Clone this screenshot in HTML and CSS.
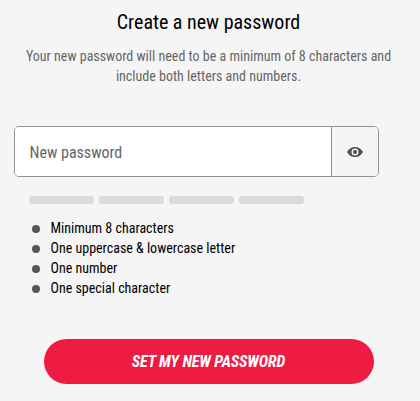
FILE: index.html
```html
<!DOCTYPE html>
<html lang="en">
<head>
<meta charset="utf-8">
<title>Create a new password</title>
<link rel="stylesheet" href="styles.css">
</head>
<body>
<main class="page">
  <h1 class="title">Create a new password</h1>
  <p class="intro"><span>Your new password will need to be a minimum of 8 characters and</span><span>include both letters and numbers.</span></p>
  <form class="form">
    <div class="field">
      <input class="input" type="password" placeholder="New password" aria-label="New password">
      <button class="toggle" type="button" aria-label="Show password">
        <svg width="16" height="10" viewBox="0 0 16 10"><path fill="#505050" fill-rule="evenodd" d="M8 0C4.400 0 1.600 2 0 5c1.600 3 4.400 5 8 5s6.400-2 8-5C14.400 2 11.600 0 8 0Zm0 8.500a3.500 3.500 0 1 1 0-7 3.500 3.500 0 0 1 0 7ZM8 3a2 2 0 1 0 0 4 2 2 0 0 0 0-4Z"/></svg>
      </button>
    </div>
    <div class="strength"><i></i><i></i><i></i><i></i></div>
    <ul class="rules">
      <li><span>Minimum 8 characters</span></li>
      <li><span>One uppercase &amp; lowercase letter</span></li>
      <li><span>One number</span></li>
      <li><span>One special character</span></li>
    </ul>
    <button class="submit" type="button">SET MY NEW PASSWORD</button>
  </form>
</main>
</body>
</html>
```
FILE: styles.css
```css
* { box-sizing: border-box; }
body { margin: 0; background: #f5f5f5; font-family: Roboto, "Liberation Sans", sans-serif; color: #000; }
.page { height: 401px; padding-top: 10px; }
.title { margin: 0; padding-right: 3px; font-size: 20px; line-height: 24px; font-weight: 400; text-align: center; font-stretch: 75%; }
.intro { margin: 12px 0 0; padding-right: 3px; font-size: 14px; line-height: 20px; text-align: center; color: #666; font-stretch: 75%; }
.intro span { display: block; }
.form { padding: 0 41px 0 14px; margin-top: 40px; }
.field { display: flex; height: 51px; border: 1px solid #929292; border-radius: 5px; background: #fff; overflow: hidden; }
.input { flex: 1; min-width: 0; border: 0; padding: 1px 14.500px 0; font: 400 16px Roboto, sans-serif; font-stretch: 75%; background: #fff; }
.input::placeholder { color: #666; opacity: 1; }
.toggle { width: 47px; padding: 0; border: 0; border-left: 1px solid #929292; background: #f5f5f5; display: flex; align-items: center; justify-content: center; }
.strength { display: flex; gap: 5px; margin: 19px 0 0 15px; }
.strength i { width: 65px; height: 8px; border-radius: 3px; background: #dbdbdb; }
.rules { list-style: none; margin: 14px 0 0 18px; padding: 0; font-size: 14px; line-height: 20px; font-stretch: 75%; }
.rules li { display: flex; align-items: center; gap: 10.500px; height: 20px; }
.rules li::before { content: ""; width: 8px; height: 8px; margin-top: 2px; border-radius: 50%; background: #555; }
.submit { display: block; width: 330px; height: 45px; margin: 41px 0 0 30px; padding: 0 1px 0 0; border: 0; border-radius: 23px; background: #ee1c40; color: #fff; font: italic 700 16px Roboto, sans-serif; font-stretch: 75%; letter-spacing: -0.12px; }
```
